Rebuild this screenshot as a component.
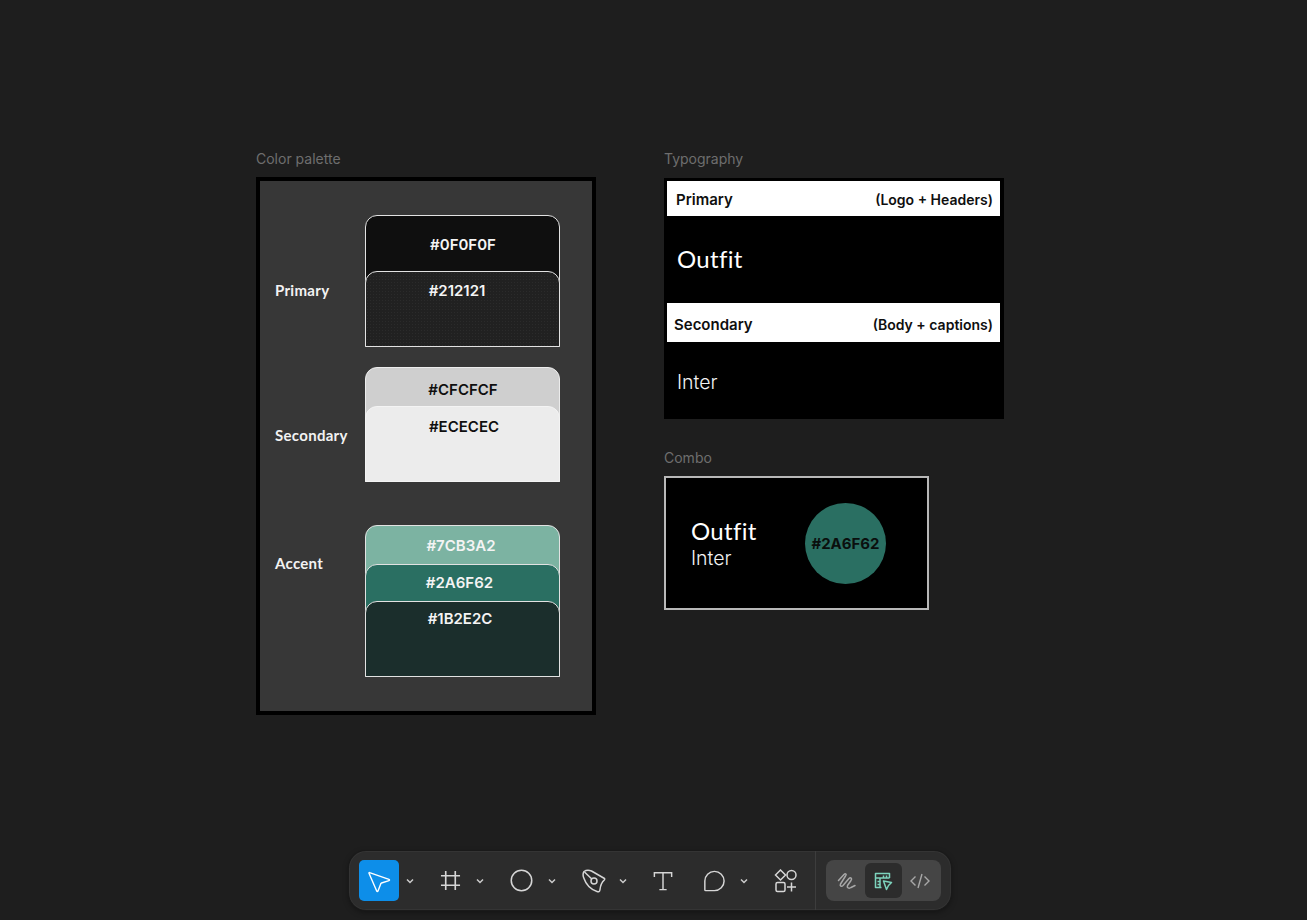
<div class="canvas">
  <main class="board">
    <section class="palette-col">
      <h2 class="frame-label">Color palette</h2>
      <div class="palette">
        <div class="group primary">
          <span class="group-name">Primary</span>
          <div class="card c0f">
            <span class="hex hex-a">#0F0F0F</span>
            <div class="card c21">
              <span class="hex hex-b">#212121</span>
            </div>
          </div>
        </div>
        <div class="group secondary">
          <span class="group-name">Secondary</span>
          <div class="card ccf">
            <span class="hex dark hex-c">#CFCFCF</span>
            <div class="card cec">
              <span class="hex dark hex-d">#ECECEC</span>
            </div>
          </div>
        </div>
        <div class="group accent">
          <span class="group-name">Accent</span>
          <div class="card c7c">
            <span class="hex hex-e">#7CB3A2</span>
            <div class="card c2a">
              <span class="hex hex-f">#2A6F62</span>
              <div class="card c1b">
                <span class="hex hex-g">#1B2E2C</span>
              </div>
            </div>
          </div>
        </div>
      </div>
    </section>

    <section class="type-col">
      <h2 class="frame-label">Typography</h2>
      <div class="typography">
        <div class="bar bar-one"><strong>Primary</strong><b>(Logo + Headers)</b></div>
        <div class="sample sample-one"><span class="outfit">Outfit</span></div>
        <div class="bar bar-two"><strong>Secondary</strong><b>(Body + captions)</b></div>
        <div class="sample sample-two"><span class="inter">Inter</span></div>
      </div>

      <h2 class="frame-label combo-label">Combo</h2>
      <div class="combo">
        <div class="combo-text">
          <span class="outfit">Outfit</span>
          <span class="inter">Inter</span>
        </div>
        <div class="circle">#2A6F62</div>
      </div>
    </section>
  </main>

  <nav class="toolbar">
    <div class="tools">
      <button class="tool move" aria-label="Move">
        <svg width="26" height="26" viewBox="0 0 26 26" fill="none" stroke="#fff" stroke-width="1.4" stroke-linejoin="round"><path d="M3.6 4.6 23 11.4 c.7.3.7 1 0 1.2 L15.5 15 c-.3.1-.5.3-.6.6 L12 23 c-.3.7-1 .7-1.300 0 L3 5.300 c-.200-.5.200-.9.600-.700Z"/></svg>
      </button>
      <svg class="chev first" width="8" height="6" viewBox="0 0 8 6"><path d="M1 1.500 4 4.500 7 1.500" fill="none" stroke="#ccc" stroke-width="1.500"/></svg>

      <button class="tool frame" aria-label="Frame">
        <svg width="21" height="21" viewBox="0 0 22 22" fill="none" stroke="#d6d6d6" stroke-width="1.700"><path d="M1 6h20M1 16h20M6 1v20M16 1v20"/></svg>
      </button>
      <svg class="chev" width="8" height="6" viewBox="0 0 8 6"><path d="M1 1.500 4 4.500 7 1.500" fill="none" stroke="#ccc" stroke-width="1.500"/></svg>

      <button class="tool shape" aria-label="Shape">
        <svg width="23" height="23" viewBox="0 0 24 24" fill="none" stroke="#d6d6d6" stroke-width="1.600"><circle cx="12" cy="12" r="10.700"/></svg>
      </button>
      <svg class="chev" width="8" height="6" viewBox="0 0 8 6"><path d="M1 1.500 4 4.500 7 1.500" fill="none" stroke="#ccc" stroke-width="1.500"/></svg>

      <button class="tool pen" aria-label="Pen">
        <svg width="24" height="24" viewBox="0 0 24 24" fill="none" stroke="#d6d6d6" stroke-width="1.500" stroke-linejoin="round"><path d="M2 2.500 C4.500 .8 7 1 9.500 2 L22.500 9.500 C22.800 10 22.700 10.500 22.300 11 C20 13 18.500 16 18 20.500 C17.800 22.800 16.500 23 15 22.500 C9 20.500 4 15.500 1.800 9 C1 7 1 4 2 2.500Z"/><path d="M2.500 3 9.800 10"/><circle cx="12" cy="12" r="3"/></svg>
      </button>
      <svg class="chev" width="8" height="6" viewBox="0 0 8 6"><path d="M1 1.500 4 4.500 7 1.500" fill="none" stroke="#ccc" stroke-width="1.500"/></svg>

      <button class="tool text" aria-label="Text">
        <svg width="20" height="20" viewBox="0 0 22 22" fill="none" stroke="#d6d6d6" stroke-width="1.600"><path d="M1.500 6.500V2h19v4.500M11 2v18.500M7 20.500h8"/></svg>
      </button>

      <button class="tool comment" aria-label="Comment">
        <svg width="22" height="22" viewBox="0 0 24 24" fill="none" stroke="#d6d6d6" stroke-width="1.600"><path d="M3 22.500H12.500A10.500 10.500 0 1 0 2 12V21.500C2 22.200 2.400 22.500 3 22.500Z"/></svg>
      </button>
      <svg class="chev" width="8" height="6" viewBox="0 0 8 6"><path d="M1 1.500 4 4.500 7 1.500" fill="none" stroke="#ccc" stroke-width="1.500"/></svg>

      <button class="tool assets" aria-label="Assets">
        <svg width="24" height="24" viewBox="0 0 24 24" fill="none" stroke="#d6d6d6" stroke-width="1.500"><path d="M6.500 1 11.500 6 6.500 11 1.500 6Z"/><circle cx="17.500" cy="6" r="4.500"/><rect x="2" y="13.500" width="9" height="9" rx="1.500"/><path d="M17.500 13.500v9M13 18h9"/></svg>
      </button>
    </div>

    <div class="modes">
      <div class="mode-group">
        <button class="mode" aria-label="Draw">
          <svg width="20" height="20" viewBox="0 0 20 20" fill="none" stroke="#a8a8a8" stroke-width="1.500" stroke-linecap="round" stroke-linejoin="round"><path d="M1.500 9.500 7 3.500C8.500 2 10 3.500 8.500 5L3.500 13C2.500 15 4.500 16 6 14.500L12 7.500C13.500 6 15.500 7.500 14 9.500L10.500 14.500C9.500 16.500 12 18 14 16.500L18 14.500"/></svg>
        </button>
        <button class="mode active" aria-label="Design">
          <svg width="20" height="20" viewBox="0 0 20 20" fill="none" stroke="#7dd3bd" stroke-width="1.500" stroke-linejoin="round"><path d="M8.500 16.500H2.500V2.500H16.500V7"/><path d="M2.500 7H16.500M7 7V16.500M10.500 4.500V7M13.500 4.500V7M4.500 10.500H7M4.500 13.500H7"/><path d="M10.500 10 18.500 11.500 15.500 14.500 13.500 18.500Z"/></svg>
        </button>
        <button class="mode" aria-label="Dev">
          <svg width="20" height="16" viewBox="0 0 20 16" fill="none" stroke="#a8a8a8" stroke-width="1.400"><path d="M5.500 3.500 1 8l4.500 4.500M14.500 3.500 19 8l-4.500 4.500M12 1 8 15"/></svg>
        </button>
      </div>
    </div>
  </nav>
</div>

<style>
  :global(body) {
    margin: 0;
    background: #1e1e1e;
  }

  .canvas {
    position: relative;
    width: 1307px;
    height: 920px;
    overflow: hidden;
    background: #1e1e1e;
    font-family: Inter, "Liberation Sans", sans-serif;
  }

  .board {
    display: flex;
    gap: 68px;
    padding: 151px 0 0 256px;
  }

  .palette-col,
  .type-col {
    display: flex;
    flex-direction: column;
    width: 340px;
  }

  .frame-label {
    margin: 0 0 10px;
    height: 16px;
    font-size: 14px;
    line-height: 16px;
    font-weight: 400;
    color: #6e6e6e;
  }

  .palette {
    box-sizing: border-box;
    width: 340px;
    height: 538px;
    border: 4px solid #000;
    background: #373737;
    padding-left: 15px;
    display: flex;
    flex-direction: column;
  }

  .group {
    display: flex;
    align-items: center;
  }

  .primary { margin-top: 34px; }
  .secondary { margin-top: 20px; }
  .accent { margin-top: 43px; }

  .group-name {
    width: 90px;
    font-family: Lato, sans-serif;
    font-size: 15px;
    font-weight: 700;
    color: #f2f2f2;
    letter-spacing: 0.300px;
  }

  .primary .group-name { margin-top: 18px; }
  .secondary .group-name { margin-top: 20px; }
  .accent .group-name { margin-top: -76px; }

  .card {
    box-sizing: border-box;
    display: flex;
    flex-direction: column;
    border: 1.500px solid #e2e2e2;
    border-radius: 12px 12px 0 0;
  }

  .card > .card {
    margin: auto -1px -1px;
  }

  .c0f { width: 195px; height: 132px; background: #0f0f0f; }
  .c21 {
    height: 76px;
    background-color: #212121;
    background-image: radial-gradient(#2b2b2b 0.600px, transparent 0.700px);
    background-size: 3px 3px;
  }
  .ccf { width: 195px; height: 115px; background: #cfcfcf; border-color: #ececec; }
  .cec { height: 76px; background: #ececec; border-color: #f4f4f4; }
  .c7c { width: 195px; height: 152px; background: #7cb3a2; }
  .c2a { height: 113px; background: #2a6f62; }
  .c1b { height: 76px; background: #1b2e2c; }

  .hex {
    font-size: 15px;
    line-height: 18px;
    font-weight: 600;
    color: #f4f4f4;
    text-align: center;
  }

  .hex.dark { color: #0f0f0f; }

  .hex-a { margin-top: 20px; padding-left: 1px; }
  .hex-b { margin-top: 10px; padding-right: 11px; }
  .hex-c { margin-top: 13px; padding-left: 1px; }
  .hex-d { margin-top: 11px; padding-left: 3px; }
  .hex-e { margin-top: 11px; padding-right: 3px; }
  .hex-f { margin-top: 9px; padding-right: 6px; }
  .hex-g { margin-top: 8px; padding-right: 5px; }

  .typography {
    box-sizing: border-box;
    width: 340px;
    height: 241px;
    margin-top: 1px;
    background: #000;
    padding: 3px 4px 0 3px;
    display: flex;
    flex-direction: column;
  }

  .bar {
    box-sizing: border-box;
    display: flex;
    justify-content: space-between;
    align-items: center;
    background: #fff;
    color: #0f0f0f;
    font-size: 14px;
    padding-right: 7px;
  }

  .bar strong { font-size: 15px; font-weight: 600; }
  .bar b { font-weight: 600; }
  .bar-one { height: 35px; padding-left: 9px; padding-top: 1px; }
  .bar-two { height: 39px; padding-left: 7px; padding-top: 3px; }

  .sample {
    display: flex;
    align-items: center;
    padding-left: 10px;
    color: #fff;
  }

  .sample-one { height: 87px; padding-bottom: 1px; box-sizing: border-box; }
  .sample-two { height: 77px; padding-top: 2px; box-sizing: border-box; }

  .outfit {
    font-family: Lato, sans-serif;
    font-size: 24px;
    font-weight: 400;
    line-height: 30px;
    letter-spacing: 0.300px;
    color: #fff;
  }

  .inter {
    font-family: Inter, sans-serif;
    font-size: 19.500px;
    font-weight: 300;
    line-height: 24px;
    color: #f2f2f2;
  }

  .combo-label { margin-top: 31px; }

  .combo {
    box-sizing: border-box;
    width: 265px;
    height: 134px;
    background: #000;
    border: 2px solid #b8b8b8;
    display: flex;
    align-items: center;
    padding-left: 25px;
  }

  .combo-text {
    display: flex;
    flex-direction: column;
    width: 114px;
  }

  .combo-text .outfit { line-height: 28px; }
  .combo-text .inter { line-height: 24px; margin-top: 1px; }

  .circle {
    width: 81px;
    height: 81px;
    border-radius: 50%;
    background: #2a6f62;
    display: flex;
    align-items: center;
    justify-content: center;
    color: #0a0f0e;
    font-size: 15px;
    font-weight: 700;
    white-space: nowrap;
  }

  .toolbar {
    position: absolute;
    left: 349px;
    top: 851px;
    box-sizing: border-box;
    width: 602px;
    height: 59px;
    display: flex;
    align-items: center;
    background: #2c2c2c;
    border-radius: 17px;
    box-shadow: 0 0 0 1px #1a1a1a, 0 0 0 1px rgba(255, 255, 255, 0.04) inset, 0 2px 6px rgba(0, 0, 0, 0.4);
  }

  .tools {
    flex: 1;
    height: 100%;
    display: flex;
    align-items: center;
    padding-left: 10px;
    position: relative;
  }

  .tool,
  .mode {
    border: 0;
    padding: 0;
    background: none;
    display: flex;
    align-items: center;
    justify-content: center;
  }

  .tool {
    flex: none;
    width: 40px;
    height: 40px;
  }

  .move {
    width: 40px;
    height: 41px;
    border-radius: 5px;
    background: #0d8ee9;
  }

  .chev { flex: none; margin-left: 7px; }
  .chev.first { margin-right: 25px; }
  .frame { width: 22px; margin-left: 0; }
  .frame + .chev { margin-left: 15px; margin-right: 25px; }
  .shape { width: 24px; }
  .shape + .chev { margin-left: 15px; margin-right: 25px; }
  .pen { width: 26px; }
  .pen + .chev { margin-left: 12px; margin-right: 25px; }
  .text { width: 22px; margin-right: 28px; }
  .comment { width: 24px; }
  .comment + .chev { margin-left: 14px; margin-right: 26px; }
  .assets { width: 24px; }

  .modes {
    box-sizing: border-box;
    width: 136px;
    height: 100%;
    border-left: 1px solid #3d3d3d;
    padding: 9px 10px;
    display: flex;
  }

  .mode-group {
    flex: 1;
    display: flex;
    align-items: stretch;
    background: #454545;
    border-radius: 8px;
    padding: 0 3px;
  }

  .mode { flex: 1; }

  .mode.active {
    background: #2c2c2c;
    border-radius: 6px;
    margin: 3px 0;
  }
</style>
